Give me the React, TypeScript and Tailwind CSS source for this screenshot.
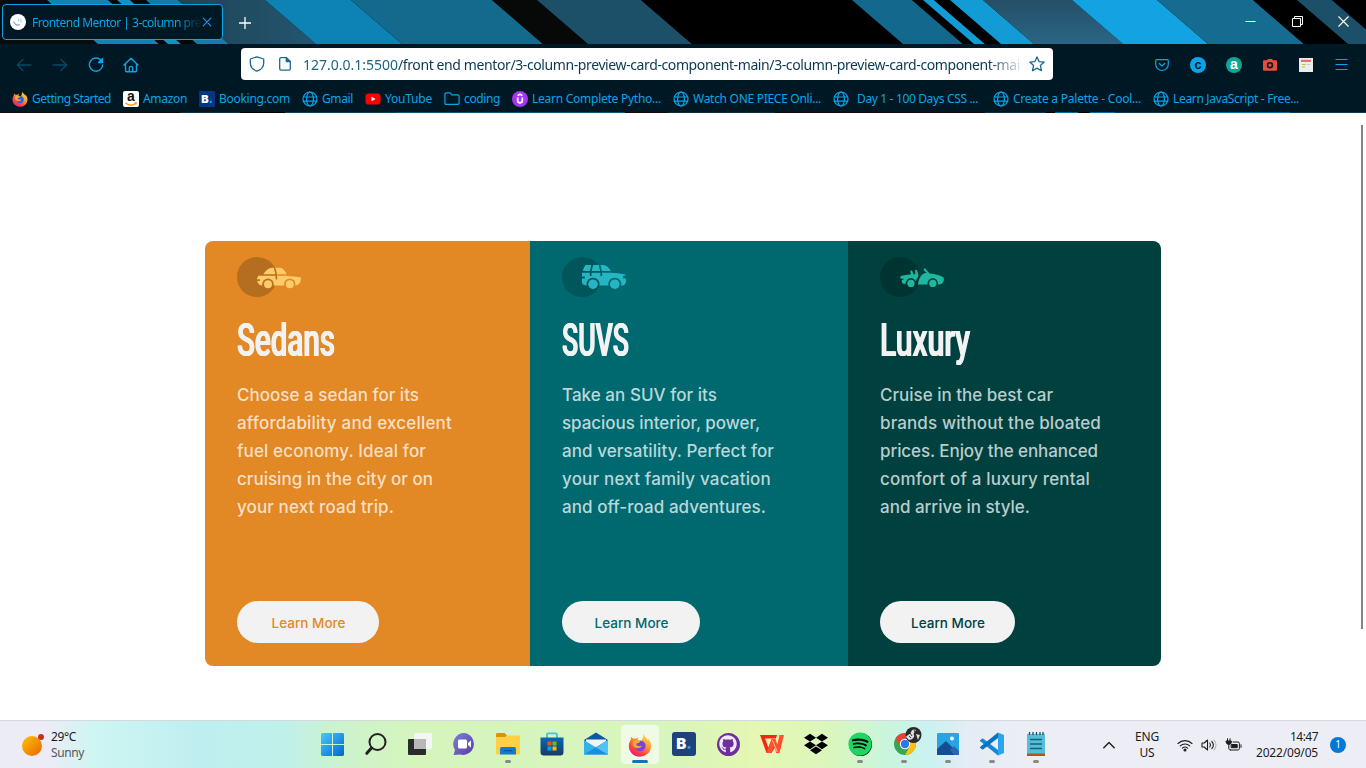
import { useLayoutEffect, useRef, type ReactNode } from "react";
import { FaDropbox, FaGithub, FaSpotify } from "react-icons/fa";

type FitProps = { className: string; children: string; squeeze?: boolean };

/* Sets a single line of text to the exact width of its box, by tracking or by horizontal scaling. */
function Fit({ className, children, squeeze = false }: FitProps) {
  const box = useRef<HTMLSpanElement>(null);
  const text = useRef<HTMLSpanElement>(null);
  useLayoutEffect(() => {
    if (!box.current || !text.current) return;
    const target = box.current.clientWidth;
    text.current.style.transform = "none";
    text.current.style.letterSpacing = "0px";
    const natural = text.current.getBoundingClientRect().width;
    if (squeeze) text.current.style.transform = `scaleX(${target / natural})`;
    else text.current.style.letterSpacing = `${(target - natural) / children.length}px`;
  }, [children, squeeze]);
  return (
    <span ref={box} className={`block shrink-0 whitespace-pre ${className}`}>
      <span ref={text} className="inline-block origin-left">{children}</span>
    </span>
  );
}

const stripes: [number, number, string][] = [
  [-60, 47, "#0a0d10"],
  [47, 108, "#1383b4"],
  [108, 117, "#050607"],
  [117, 130, "#1790c4"],
  [130, 146, "#050607"],
  [146, 178, "#137cab"],
  [178, 265, "url(#slate)"],
  [265, 351, "#0c83b4"],
  [351, 492, "#136a8d"],
  [492, 537, "#070808"],
  [537, 641, "#1b5068"],
  [641, 852, "#000000"],
  [852, 912, "#12698d"],
  [912, 923, "#000000"],
  [923, 934, "#129bd4"],
  [934, 950, "#000000"],
  [950, 983, "#129bd4"],
  [983, 1072, "url(#slate2)"],
  [1072, 1157, "#13a3e2"],
  [1157, 1253, "#156c90"],
  [1253, 1297, "#000000"],
  [1297, 1332, "#1b5068"],
  [1332, 1420, "#000000"],
];

function Stripes() {
  return (
    <svg className="absolute inset-0 h-[44px] w-full" viewBox="0 0 1366 44">
      <defs>
        <linearGradient id="slate"><stop offset="0" stopColor="#1f4355" /><stop offset="1" stopColor="#235670" /></linearGradient>
        <linearGradient id="slate2" x2="0" y2="1"><stop offset="0" stopColor="#254f66" /><stop offset="1" stopColor="#2a6586" /></linearGradient>
      </defs>
      <rect width="1366" height="44" fill="#000" />
      {stripes.map(([a, b, fill]) => (
        <polygon key={a} fill={fill} points={`${a},0 ${b},0 ${b + 51},44 ${a + 51},44`} />
      ))}
    </svg>
  );
}

const line = { fill: "none", stroke: "currentColor", strokeLinecap: "round", strokeLinejoin: "round" } as const;

function Globe() {
  return (
    <svg className="size-4" viewBox="0 0 16 16" {...line} strokeWidth="1.2">
      <circle cx="8" cy="8" r="7" />
      <ellipse cx="8" cy="8" rx="3.4" ry="7" />
      <path d="M1.3 6h13.4M1.3 10.2h13.4" />
    </svg>
  );
}

function Firefox({ className, id }: { className: string; id: string }) {
  return (
    <svg className={className} viewBox="0 0 24 24">
      <defs>
        <linearGradient id={id} x1="0.85" y1="0" x2="0.2" y2="1">
          <stop offset="0" stopColor="#fff44f" /><stop offset=".35" stopColor="#ffa436" /><stop offset=".7" stopColor="#ff4a3d" /><stop offset="1" stopColor="#e4137f" />
        </linearGradient>
      </defs>
      <path fill={`url(#${id})`} d="M15 .7c1 2 2.300 2.900 3.500 4.300.8.900 1 1.700 1.100 2.500.5-.5.5-1.400.3-2.200 2.200 2.300 3.500 5.100 3.300 8.500A11.300 10.700 0 0 1 12 23.700C5.700 23.700.8 19 .8 13.200c0-2.700.9-5 2-6.700l.3-2.700 2 2c.9-.3 2-.3 3 0C9.300 4.800 10 4.500 11 4.300c-.8.700-1.300 1.700-1.300 2.500.8.900 2 1.200 3.500 1.300C14.600 5.700 15.600 3.600 15 .7z" />
      <circle cx="12.200" cy="12.800" r="5.400" fill={id === "ff-small" ? "#2a62d8" : "#7542e5"} />
      <path fill="#ffa52c" d="M5 8c2-1.200 5-.8 7.400.2-.6 1.600-2.200 1.800-3.700 2.200-.8 1.500.2 2.600 1.900 2.500 1.200 0 2.300-.7 3.200.2-1.800 2.600-6 3.100-8.300.5C4.400 12 4.200 10 5 8z" />
    </svg>
  );
}

function SmallIcon({ kind }: { kind: string }) {
  switch (kind) {
    case "firefox":
      return <Firefox className="size-4" id="ff-small" />;
    case "amazon":
      return (
        <svg className="size-4" viewBox="0 0 16 16">
          <rect width="16" height="16" rx="2" fill="#fff" />
          <text x="8" y="10.400" textAnchor="middle" className="font-['Liberation_Sans'] text-[14px] font-bold" fill="#111">a</text>
          <path d="M2.500 12c3.500 2.600 7.500 2.600 10.500.2" fill="none" stroke="#f90" strokeWidth="1.300" />
          <path d="M11.500 11.600h2l-.6 2" fill="none" stroke="#f90" strokeWidth=".9" />
        </svg>
      );
    case "booking":
      return <span className="flex size-4 items-center justify-center rounded-[1px] bg-[#053584] text-[11px] leading-4 font-black text-white font-['Inter',sans-serif]">B<span className="text-[#16a5e8]">.</span></span>;
    case "youtube":
      return (
        <svg className="size-4" viewBox="0 0 16 16"><rect x="0.500" y="2.500" width="15" height="11" rx="2.800" fill="#f00" /><path d="M6.500 5.700v4.600l4-2.300z" fill="#fff" /></svg>
      );
    case "folder":
      return <svg className="size-4" viewBox="0 0 16 16" {...line} strokeWidth="1.200"><path d="M.9 12V3.300c0-.9.5-1.400 1.400-1.400h3.200c.7 0 1.100.3 1.400.9l.5 1h6.300c.9 0 1.400.5 1.400 1.400V12c0 .9-.5 1.400-1.400 1.400H2.300C1.400 13.400.9 12.900.9 12z" /></svg>;
    case "udemy":
      return (
        <svg className="size-4" viewBox="0 0 16 16"><circle cx="8" cy="8" r="8" fill="#a435f0" /><path d="M5.700 6.500V9.600a2.300 2.300 0 0 0 4.600 0V6.500M5.600 4.600 8 3.200l2.400 1.400" fill="none" stroke="#fff" strokeWidth="1.700" /></svg>
      );
    default:
      return <Globe />;
  }
}

const bookmarks: [string, string, string][] = [
  ["firefox", "Getting Started", "w-[79px]"],
  ["amazon", "Amazon", "w-[44px]"],
  ["booking", "Booking.com", "w-[71px]"],
  ["globe", "Gmail", "w-[31px]"],
  ["youtube", "YouTube", "w-[47px]"],
  ["folder", "coding", "w-[36px]"],
  ["udemy", "Learn Complete Pytho...", "w-[129px]"],
  ["globe", "Watch ONE PIECE Onli...", "w-[128px]"],
  ["globe", "Day 1 - 100 Days CSS ...", "ml-1 mr-[3px] w-[121px]"],
  ["globe", "Create a Palette - Cool...", "w-[128px]"],
  ["globe", "Learn JavaScript - Free...", "w-[126px]"],
];

function Browser() {
  return (
    <header className="shrink-0 bg-[#001823] text-[#0ba4e9] font-['Noto_Sans','Open_Sans',sans-serif]">
      <div className="relative h-[44px] overflow-hidden">
        <Stripes />
        <div className="relative flex h-full items-start">
          <div className="mt-1 ml-[2px] flex h-[36px] w-[221px] items-center rounded-[4px] border border-[#0ba4e9] bg-[#001823] pl-[7px]">
            <svg className="size-4 shrink-0" viewBox="0 0 16 16"><circle cx="8" cy="8" r="8" fill="#fff" /><path d="M3.700 7.500c.6 2.500 3 4.200 6 3.300" fill="none" stroke="#5570b5" strokeWidth="1" /><path d="M8.500 4.500v3M12 5 9.800 6.700 12 8" fill="none" stroke="#8ccfe0" strokeWidth=".8" /></svg>
            <div className="mt-[2px] ml-[6px] w-[169px] overflow-hidden text-[12px] leading-[18px] [mask-image:linear-gradient(to_right,black_145px,transparent_170px)]">
              <Fit className="w-[169px]">Frontend Mentor | 3-column pre</Fit>
            </div>
            <svg className="ml-[1px] size-[10px] shrink-0" viewBox="0 0 10 10" {...line} strokeWidth="1.100"><path d="m1.200 1.200 7.600 7.600m0-7.600L1.200 8.800" /></svg>
          </div>
          <svg className="mt-[17px] ml-[16px] size-3" viewBox="0 0 12 12" stroke="#fff" strokeWidth="1.300"><path d="M6 0v12M0 6h12" /></svg>
          <div className="mt-[16px] mr-[17px] ml-auto flex text-white">
            <svg className="mr-[36px] size-[11px]" viewBox="0 0 11 11" stroke="#fff"><path d="M.5 5.500h10" /></svg>
            <svg className="mr-[35px] size-[11px]" viewBox="0 0 11 11" fill="none" stroke="#fff"><path d="M.5 2.500h8v8h-8zM2.500 2.500v-2h8v8h-2" /></svg>
            <svg className="size-[11px]" viewBox="0 0 11 11" stroke="#fff" strokeWidth="1.100"><path d="m.5.500 10 10m0-10-10 10" /></svg>
          </div>
        </div>
      </div>
      <div className="flex h-[41px] items-center pl-4">
        <svg className="size-4 text-[#044a69]" viewBox="0 0 16 16" {...line} strokeWidth="1.300"><path d="M15 8H1.500M7 2.500 1.300 8 7 13.500" /></svg>
        <svg className="ml-5 size-4 text-[#044a69]" viewBox="0 0 16 16" {...line} strokeWidth="1.300"><path d="M1 8h13.500M9 2.500 14.700 8 9 13.500" /></svg>
        <svg className="ml-5 size-4" viewBox="0 0 16 16" {...line} strokeWidth="1.400"><path d="M12.800 3A6.600 6.600 0 1 0 14.600 8" /><path d="M14.500 1.500v4h-4z" fill="currentColor" /></svg>
        <svg className="ml-[19px] size-4" viewBox="0 0 16 16" {...line} strokeWidth="1.400"><path d="m1 8 7-6.700L15 8M2.500 7v6.500c0 .8.400 1.200 1.200 1.200h8.600c.8 0 1.200-.4 1.200-1.200V7M6.300 14.500V11c0-1 .7-1.600 1.700-1.600s1.700.6 1.700 1.600v3.500" /></svg>
        <div className="mb-[1px] ml-[102px] flex h-8 w-[812px] items-center rounded-[4px] bg-white pl-2 text-[#1a6a8f]">
          <svg className="size-4" viewBox="0 0 16 16" {...line} strokeWidth="1.300"><path d="M8 .8 14.700 3v4c0 3.700-2.400 6.600-6.700 8.200C3.700 13.600 1.300 10.700 1.300 7V3z" /></svg>
          <svg className="ml-3 size-4" viewBox="0 0 16 16" {...line} strokeWidth="1.300"><path d="M2.700 12.800V3c0-.9.500-1.400 1.400-1.400h5.200l4 4v7.200c0 .9-.5 1.400-1.400 1.400H4.100c-.9 0-1.400-.5-1.400-1.400z" /><path d="M9.300 1.600v4h4z" fill="currentColor" /></svg>
          <div className="mt-[2px] ml-[10px] flex w-[718px] overflow-hidden text-[14px] leading-5 text-[#093a50] [mask-image:linear-gradient(to_right,black_685px,transparent_722px)]">
            <Fit className="w-[95px] text-[#1a6583]">127.0.0.1:5500</Fit>
            <Fit className="w-[622px]">/front end mentor/3-column-preview-card-component-main/3-column-preview-card-component-mai</Fit>
          </div>
          <svg className="ml-[8px] size-4" viewBox="0 0 16 16" {...line} strokeWidth="1.300"><path d="m8 .9 2.100 4.700 5.100.5-3.800 3.500 1.100 5.100L8 12.100l-4.500 2.600 1.100-5.100L.8 6.100l5.100-.5z" /></svg>
        </div>
        <svg className="ml-[102px] size-[14px]" viewBox="0 0 14 14" {...line} strokeWidth="1.200"><path d="M1.800 1.600h10.400c.7 0 1.100.4 1.100 1.100v3.500a6.300 6.300 0 0 1-12.600 0V2.700c0-.7.4-1.100 1.100-1.100zM4.300 5.500 7 8l2.700-2.500" /></svg>
        <svg className="ml-[21px] size-4" viewBox="0 0 16 16"><circle cx="8" cy="8" r="8" fill="#0ba4e9" /><text x="8" y="11.500" textAnchor="middle" className="font-['Liberation_Sans'] text-[13px] font-bold" fill="#001823">c</text></svg>
        <svg className="ml-5 size-4" viewBox="0 0 16 16"><circle cx="8" cy="8" r="8" fill="#0fa596" /><text x="8" y="12" textAnchor="middle" className="font-['Liberation_Sans'] text-[14px] font-bold" fill="#fff">a</text></svg>
        <svg className="ml-5 size-4" viewBox="0 0 16 16"><path d="M2.500 3.200H5L6 2h4l1 1.200h2.500c1 0 1.500.5 1.500 1.300v8c0 .8-.5 1.300-1.500 1.300h-11C1.500 13.800 1 13.300 1 12.500v-8c0-.8.5-1.300 1.500-1.300z" fill="#e74c3c" /><circle cx="8" cy="8.200" r="2.400" fill="none" stroke="#001823" strokeWidth="1.600" /></svg>
        <svg className="ml-5 size-4" viewBox="0 0 16 16"><path d="M1 1h14v14H1z" fill="#ececec" /><path d="M3 2.800h10V5H3z" fill="#f36c6c" /><path d="M4 7.500h4M4 10h3" stroke="#a8cf45" /><path d="M9 7.500h3.500" stroke="#ccc" /></svg>
        <svg className="ml-[21px] size-[13px]" viewBox="0 0 13 13" stroke="currentColor" strokeWidth="1.100"><path d="M.5 1.500h12M.5 6.500h12M.5 11.500h12" /></svg>
      </div>
      <div className="flex h-[27px] items-center gap-3 pl-3">
        {bookmarks.map(([kind, label, width]) => (
          <div key={label} className="flex items-center gap-1 text-[12px] leading-[18px]">
            <SmallIcon kind={kind} />
            <Fit className={width}>{label}</Fit>
          </div>
        ))}
      </div>
      <div className="h-px bg-[linear-gradient(to_right,#14080a_180px,#0d3040_180px_240px,#000_240px_285px,#0d4058_285px_395px,#0a5474_395px_625px,#12080a_625px_668px,#0d2a38_668px_775px,#12080a_775px_985px,#0d3040_985px_1046px,#000_1046px_1055px,#0a6a94_1055px_1078px,#000_1078px_1090px,#0a6a94_1090px_1115px,#0d3a50_1115px_1200px,#0a6a94_1200px_1290px,#0d3a50_1290px)]" />
    </header>
  );
}

function CarIcon({ id, shade, fill, wheelY, wheelR, cuts, children }: { id: string; shade: string; fill: string; wheelY: number; wheelR: number; cuts: string; children: ReactNode }) {
  return (
    <svg className="h-10 w-16 shrink-0" viewBox="0 0 64 40">
      <mask id={id}>
        <rect width="64" height="40" fill="#fff" />
        <circle cx="31" cy={wheelY} r={wheelR + 1.7} fill="#000" />
        <circle cx="52.800" cy={wheelY} r={wheelR + 1.7} fill="#000" />
        <path d={cuts} fill="none" stroke="#000" strokeWidth="1.700" />
      </mask>
      <circle cx="20" cy="20" r="20" fill={shade} />
      <g mask={`url(#${id})`} fill={fill}>{children}</g>
      <circle cx="31" cy={wheelY} r={wheelR} fill={fill} />
      <circle cx="52.800" cy={wheelY} r={wheelR} fill={fill} />
    </svg>
  );
}

function Sedan() {
  return (
    <CarIcon id="sedan" shade="#b56d1f" fill="#fecb68" wheelY={27.3} wheelR={4} cuts="M37.500 10c1.200 3.500 1.900 6.500 2 12.500">
      <path d="M26.200 17.200C28 14.800 30 12.600 32 11.500c1-.6 2.500-.8 4.500-.8h5c4 0 6 1.800 8.200 6.500z" />
      <path d="M21 18.700h24c8 .2 13 1 18 1.500.7.100 1 .500 1 1.200 0 3.600-2 6.600-5.500 7H25.500c-2.500-.3-4-1-4.700-3l-.7-1.500h2.800v-1.700h-2.900v-1.700h1z" />
    </CarIcon>
  );
}

function Suv() {
  return (
    <CarIcon id="suv" shade="#01565b" fill="#26b5c3" wheelY={27.2} wheelR={4.8} cuts="M30.400 7 28.700 14.500V19M37.400 7l1.900 8v4">
      <path d="M20.800 14c.5-2.200 1.300-4 2.200-5.400.3-.5.600-.6 1.200-.6h16c3.500 0 6 1.500 8.700 6z" />
      <path d="M20 15.700h28c6 .1 10.500.8 14.500 1.500.7.100 1.200.6 1.200 1.200h-2.500v3.200h2.800v2.500c0 2-1.200 4.100-3 4.500H24.500c-3-.5-4.500-1.300-4.500-3.500v-3.500h2.800v-2H20z" />
    </CarIcon>
  );
}

function Luxury() {
  return (
    <CarIcon id="luxury" shade="#003433" fill="#1eb79f" wheelY={26.4} wheelR={3.6} cuts="M38 10.500">
      <path d="M21.500 18.800c3-.5 6-1 9.500-1.600l-.7-2.400c-.3-1.400 1.600-1.900 2.100-.6l1 3c1 .3 2 0 2-1l-.3-2.600c0-1.200 1.900-1.200 2.100 0l1.200 4.500c.2 1.200-.4 2-1 3L35.500 24.500H26c0 2-.7 3-2.500 2.300-1.300-.8-1.800-1.500-1.800-3.500l2.500-1.200-3.500-.5c-.8-1-.4-2.500.8-2.800z" />
      <path d="m43.800 13.200c-.8-1.200.8-2.400 1.700-1.400l4.100 4.800c5 .4 12 2.200 14.200 4.200.5 3.800-1.500 6.800-5.500 6.800H38c.5-5 2.300-9.300 6.800-11.500h2z" />
    </CarIcon>
  );
}

const cards = [
  {
    title: "Sedans", titleWidth: "w-[98px]", icon: <Sedan />, box: "w-[325px] bg-[#e28825] text-[#e28825]", button: "w-[142px]", body: "text-[#f8dfc4]",
    lines: [
      ["Choose a sedan for its", "w-[182px]"],
      ["affordability and excellent", "w-[215px]"],
      ["fuel economy. Ideal for", "w-[189px]"],
      ["cruising in the city or on", "w-[196px]"],
      ["your next road trip.", "w-[157px]"],
    ],
  },
  {
    title: "SUVS", titleWidth: "w-[67px]", icon: <Suv />, box: "w-[318px] bg-[#006970] text-[#006970]", button: "w-[138px]", body: "text-[#bad7d9]",
    lines: [
      ["Take an SUV for its", "w-[155px]"],
      ["spacious interior, power,", "w-[198px]"],
      ["and versatility. Perfect for", "w-[212px]"],
      ["your next family vacation", "w-[209px]"],
      ["and off-road adventures.", "w-[204px]"],
    ],
  },
  {
    title: "Luxury", titleWidth: "w-[90px]", icon: <Luxury />, box: "w-[313px] bg-[#004140] text-[#004140]", button: "w-[135px]", body: "text-[#bacccc]",
    lines: [
      ["Cruise in the best car", "w-[173px]"],
      ["brands without the bloated", "w-[221px]"],
      ["prices. Enjoy the enhanced", "w-[218px]"],
      ["comfort of a luxury rental", "w-[210px]"],
      ["and arrive in style.", "w-[150px]"],
    ],
  },
];

function Page() {
  return (
    <main className="relative flex h-[607px] shrink-0 justify-center bg-white pt-[128px] font-['Inter',sans-serif]">
      <div className="flex h-[425px] overflow-hidden rounded-lg">
        {cards.map((card) => (
          <section key={card.title} className={`flex flex-col items-start px-8 pt-4 ${card.box}`}>
            {card.icon}
            <h2 className="mt-[16px] text-[46px] leading-[54px] font-medium text-[#f2f2f2] font-['Roboto',sans-serif] [text-shadow:0.900px_0_0_#f2f2f2,-0.900px_0_0_#f2f2f2]">
              <Fit squeeze className={card.titleWidth}>{card.title}</Fit>
            </h2>
            <div className={`mt-[14px] text-[17px] leading-7 font-[450] ${card.body}`}>
              {card.lines.map(([text, width]) => <Fit key={text} className={width}>{text}</Fit>)}
            </div>
            <button className={`mt-[80px] flex h-[42px] items-center justify-center rounded-[21px] bg-[#f2f2f2] pt-[2px] pl-px text-[13.5px] font-medium ${card.button}`}>
              <Fit className="w-[74px] text-left">Learn More</Fit>
            </button>
          </section>
        ))}
      </div>
      <div className="absolute top-[12px] right-[3px] h-[504px] w-[2px] bg-[#858585]" />
    </main>
  );
}

function WindowsLogo() {
  return (
    <svg className="size-[23px]" viewBox="0 0 23 23">
      <defs><linearGradient id="win" x2="1" y2="1"><stop stopColor="#4cc8fb" /><stop offset="1" stopColor="#0067cf" /></linearGradient></defs>
      <path fill="url(#win)" d="M1 0h10v11H0V1zM12 0h10l1 1v10H12zM0 12h11v11H1l-1-1zM12 12h11v10l-1 1H12z" />
    </svg>
  );
}

const apps: { id: string; icon: ReactNode; running?: boolean }[] = [
  { id: "start", icon: <WindowsLogo /> },
  { id: "search", icon: <svg className="size-6" viewBox="0 0 24 24" fill="none" stroke="#222" strokeLinecap="round"><circle cx="13.500" cy="10" r="8" strokeWidth="2" /><path d="m7.500 16-4.700 5.300" strokeWidth="3" /></svg> },
  { id: "tasks", icon: <svg className="size-6" viewBox="0 0 24 24"><rect x="0" y="7" width="18" height="16" rx="1" fill="#2b2b2b" /><rect x="6" y="1" width="18" height="16" rx="1" fill="#f5f5f5" /><path d="M6 7h12v10H6z" fill="#b8b8b8" /></svg> },
  { id: "chat", icon: <svg className="size-6" viewBox="0 0 24 24"><defs><linearGradient id="chat" x2="1" y2="1"><stop stopColor="#7b83d8" /><stop offset="1" stopColor="#5b3aa8" /></linearGradient></defs><path d="M12.500 1A11 11 0 1 1 8 22.500L1.500 23l1.500-5A11 11 0 0 1 12.500 1z" fill="url(#chat)" /><rect x="6" y="7.500" width="9" height="9" rx="1.500" fill="#fff" /><path d="m16 11 3-2.500v7L16 13z" fill="#fff" /></svg> },
  { id: "explorer", running: true, icon: <svg className="size-6" viewBox="0 0 24 24"><path d="M0 2.500C0 1.500.500 1 1.500 1h7L11 3.500V8H0z" fill="#d99400" /><path d="M0 5h9l2-1.500h12c.7 0 1 .3 1 1V21c0 1-.5 1.500-1.500 1.500h-21C.500 22.500 0 22 0 21z" fill="#ffcf45" /><path d="M4 22.500V17c0-1.200.8-2 2-2h12c1.200 0 2 .8 2 2v5.500z" fill="#127bd0" /><path d="M8 18.700h8" stroke="#0a539b" strokeWidth="1.300" /></svg> },
  { id: "store", icon: <svg className="size-6" viewBox="0 0 24 24"><defs><linearGradient id="store" x2="0" y2="1"><stop stopColor="#0d67b4" /><stop offset="1" stopColor="#173a66" /></linearGradient></defs><path d="M7 7V3c0-1.200.5-1.700 1.500-1.700h7C16.500 1.300 17 1.800 17 3v4" stroke="#3fc0ee" strokeWidth="1.800" fill="none" /><path d="M.500 5.500h23V20c0 2.500-1 3.500-3.500 3.500H4C1.500 23.500.5 22.500.5 20z" fill="url(#store)" /><path d="M7.500 9.500h4v4h-4z" fill="#f25022" /><path d="M12.500 9.500h4v4h-4z" fill="#7fba00" /><path d="M7.500 14.500h4v4h-4z" fill="#00a4ef" /><path d="M12.500 14.500h4v4h-4z" fill="#ffb900" /></svg> },
  { id: "mail", icon: <svg className="size-6" viewBox="0 0 24 24"><path d="m0 8 12-7.500L24 8v4H0z" fill="#0a5aa6" /><path d="M2 7.500h20V14H2z" fill="#f3f3f3" /><path d="m0 8 12 7.500L24 8v14.500H0z" fill="#32b1ee" /><path d="M0 22.500 24 8v14.500z" fill="#1a8fe0" /><path d="m12 15.500 12 7V8z" fill="#50c3f5" /></svg> },
  { id: "firefox", icon: <Firefox className="size-6" id="ff-large" /> },
  { id: "booking", icon: <span className="flex size-6 items-center justify-center rounded-[3px] bg-[#20427a] text-[15px] font-black text-white font-['Inter',sans-serif]">B<span className="text-[#16a5e8]">.</span></span> },
  { id: "github", icon: <span className="flex size-[23px] items-center justify-center rounded-full bg-[#6c2f9c]"><FaGithub className="size-[18px] text-[#f1e8f7]" /></span> },
  { id: "wps", icon: <svg className="size-6" viewBox="0 0 24 24"><path d="M0 3h17l-1 3.500H5.500l3 8.500 3.500-8 3 8.500-3.500 5.500h-5z" fill="#f4260d" /><path d="M11.500 7 6.500 21h5l3-7.500 1.500 7.500h3.500L24 3h-4.500l-2.200 9.500L15.500 7z" fill="#ff512b" /><path d="M12.500 8.500 17.300 20M5.500 6.500l3 8.500" stroke="#ffd3c4" strokeWidth=".8" /></svg> },
  { id: "dropbox", icon: <FaDropbox className="size-6 text-black" /> },
  { id: "spotify", running: true, icon: <span className="flex size-[23px] items-center justify-center rounded-full bg-black"><FaSpotify className="size-6 shrink-0 text-[#1ed760]" /></span> },
  { id: "chrome", running: true, icon: (
    <svg className="-mt-2 -mr-2 h-8 w-7 shrink-0" viewBox="0 0 28 32">
      <circle cx="11" cy="20" r="11" fill="#34a853" /><path d="M1.500 14.500A11 11 0 0 1 20.500 14.500L11 15z" fill="#ea4335" /><path d="M1.500 14.500 6.500 23 11 15l9-1z" fill="#ea4335" /><path d="M20.800 15A11 11 0 0 1 11 31l5-9-2-7z" fill="#fbc116" /><circle cx="11" cy="20" r="5.200" fill="#fff" /><circle cx="11" cy="20" r="4.200" fill="#2b76e8" />
      <circle cx="19.500" cy="11" r="8" fill="#2a2a2a" /><path d="M12 13c2-3 4-2 5-5s3-3 5-2c-1 2-3 3-2 5s-2 5-5 5zM22 10l4 1-2 5z" fill="#ddd" /><path d="M15 12l2 2M20 6l1 2M16 9l2 3" stroke="#333" />
    </svg>
  ) },
  { id: "photos", running: true, icon: <svg className="size-6" viewBox="0 0 24 24"><rect x="1" y="1" width="22" height="22" rx="1" fill="#27a4e3" /><path d="m1 17 9-8 13 13v1H1z" fill="#164d92" /><path d="m14 18 4-4 5 5v4h-5z" fill="#2966ad" /><circle cx="16" cy="6.500" r="2" fill="#fff" /></svg> },
  { id: "code", running: true, icon: <svg className="size-6" viewBox="0 0 24 24"><path d="M18 .5 24 3v18l-6 2.500z" fill="#2aa4ef" /><path d="M0 8.300 2 6.700c.4-.3.900-.3 1.300 0L18 18v5.500L.3 9.300C0 9 0 8.600 0 8.300z" fill="#1687d2" /><path d="m0 15.700 2 1.600c.4.300.9.300 1.300 0L18 6V.5L.3 14.700c-.3.300-.3.700-.3 1z" fill="#0d72be" /></svg> },
  { id: "notepad", running: true, icon: <svg className="size-6" viewBox="0 0 24 24"><path d="M3 21h18v3H3z" fill="#a85b1a" /><path d="M3 2h18v19.500H3z" fill="#55bfd8" /><path d="M5.500 0v3M9 0v3M12.500 0v3M16 0v3M19 0v3" stroke="#15506d" strokeWidth="1.300" /><path d="M6 7.500h12M6 12h12M6 16.500h12" stroke="#15607f" strokeWidth="1.400" /></svg> },
];

function Taskbar() {
  return (
    <footer className="flex h-12 shrink-0 border-t border-[#d3dadb] bg-[linear-gradient(to_right,#ebecf6_50px,#cdf6f3_95px,#bfeef0_200px,#c0f0ea_285px,#ccf3cf_340px,#d5f5bd_410px,#d8f5bc_670px,#e5f7b2_760px,#dbf6bd_830px,#c9f5df_890px,#c9f2f1_930px,#e4ecf5_965px,#edeef5_1030px)] text-[12px] text-[#1c1c1c] font-['Noto_Sans','Open_Sans',sans-serif]">
      <div className="flex w-[310px] items-center pl-[21px]">
        <svg className="h-6 w-[23px]" viewBox="0 0 23 24"><defs><linearGradient id="sun" x2="1" y2="1"><stop stopColor="#ffc400" /><stop offset="1" stopColor="#e86500" /></linearGradient></defs><circle cx="11" cy="13" r="10" fill="url(#sun)" /><circle cx="20" cy="4" r="3" fill="#cc2c1e" /></svg>
        <div className="mt-px ml-[7px] leading-4">
          <Fit className="w-[25px]">29°C</Fit>
          <Fit className="w-[33px] text-[#50585c]">Sunny</Fit>
        </div>
      </div>
      {apps.map(({ id, icon, running }) => (
        <div key={id} className="flex w-11 flex-col items-center">
          <div className={`mt-1 flex w-[38px] items-center justify-center rounded-[4px] ${id === "firefox" ? "h-[39px] bg-white/60" : "h-[38px]"}`}>{icon}</div>
          {running && <span className="-mt-[3px] h-[3px] w-[6px] rounded-full bg-[#858b88]" />}
          {id === "firefox" && <span className="-mt-[4px] h-[3px] w-4 rounded-full bg-[#0a74c9]" />}
        </div>
      ))}
      <div className="ml-[45px] flex items-center">
        <svg className="h-2 w-3" viewBox="0 0 12 8" {...line} strokeWidth="1.400"><path d="m.8 6.800 5.200-5.200 5.200 5.200" /></svg>
        <div className="ml-[20px] flex flex-col items-center leading-4"><Fit className="w-[24px]">ENG</Fit><Fit className="w-[15px]">US</Fit></div>
        <svg className="ml-[18px] h-[14px] w-4" viewBox="0 0 16 14" {...line} strokeWidth="1.100"><path d="M1 5.500a10 10 0 0 1 14 0M3.200 7.900a7 7 0 0 1 9.600 0M5.300 10.200a4 4 0 0 1 5.400 0" /><circle cx="8" cy="12" r="1" fill="currentColor" /></svg>
        <svg className="ml-2 h-[14px] w-4" viewBox="0 0 16 14" {...line} strokeWidth="1.100"><path d="M1 5h2.200L6.500 2v10L3.200 9H1zM8.800 5c.9 1.200.9 2.800 0 4M10.800 3.300c1.900 2.200 1.900 5.200 0 7.400" /><path d="M13 1.800c2.500 3.200 2.500 7.200 0 10.400" stroke="#b8b8b8" /></svg>
        <svg className="ml-[8px] h-[14px] w-[17px]" viewBox="0 0 17 14" {...line} strokeWidth="1"><path d="M5.500 12H13c.9 0 1.400-.5 1.400-1.400V5.400C14.400 4.500 13.900 4 13 4H8M16 6.800v2.600M2.500.7v2M5 .7v2M3.800 6v4c0 1.300.5 2 1.700 2" /><path d="M1.300 3h5v1.500c0 1-.9 1.800-2.500 1.800S1.300 5.500 1.300 4.500zM6.500 6.500h5.700v3.200H6.500z" fill="currentColor" /></svg>
        <div className="ml-[14px] flex flex-col items-end leading-4"><Fit className="w-[28px]">14:47</Fit><Fit className="w-[62px]">2022/09/05</Fit></div>
        <span className="ml-[12px] flex size-4 items-center justify-center rounded-full bg-[#0078d7] text-[10px] text-white">1</span>
      </div>
    </footer>
  );
}

export default function App() {
  return (
    <div className="flex h-[768px] w-[1366px] flex-col overflow-hidden bg-white">
      <Browser />
      <Page />
      <Taskbar />
    </div>
  );
}
